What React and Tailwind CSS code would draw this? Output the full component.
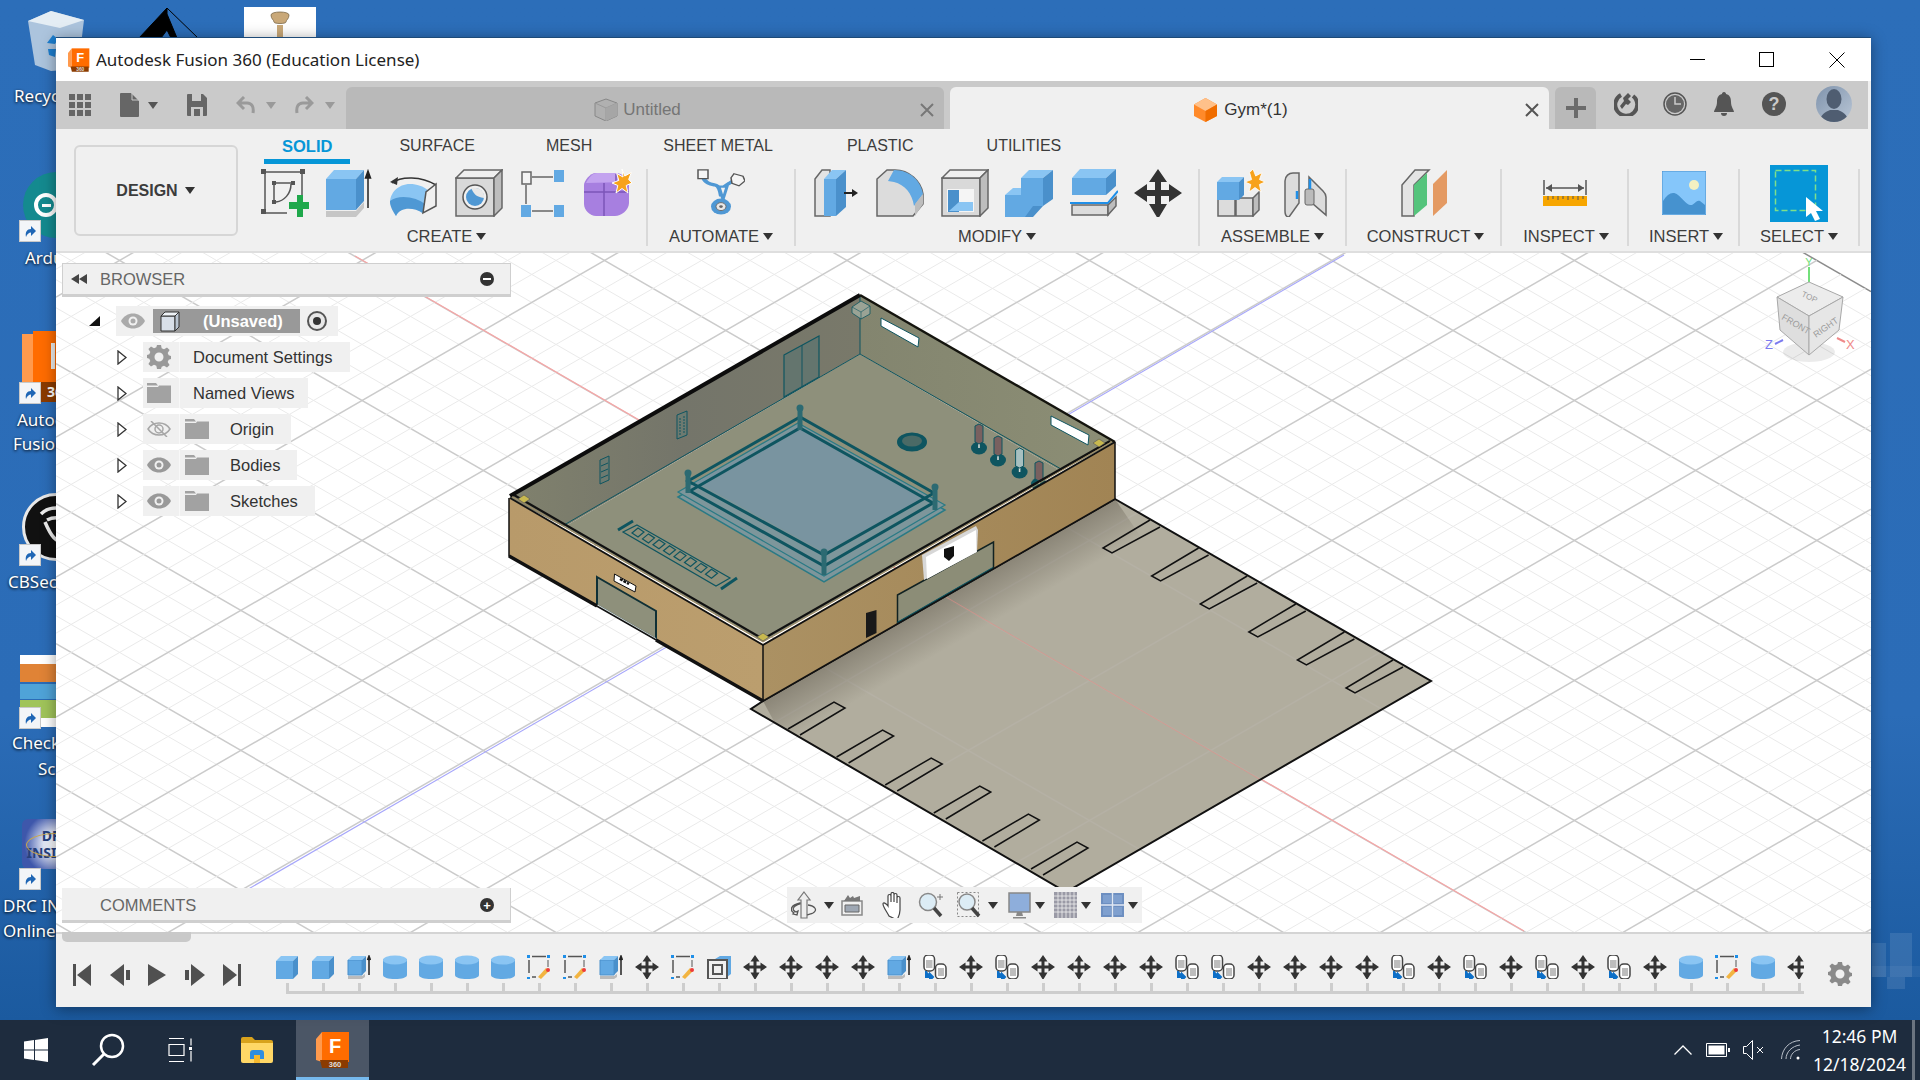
import React from 'react';

const Caret = ({ c = '#333' }) => (
  <svg width="10" height="7" viewBox="0 0 10 7" className="shrink-0"><path d="M0 0h10L5 7z" fill={c} /></svg>
);

// small glyphs shared by the toolbar and the timeline
const MoveIcon = ({ s = 24 }) => (
  <svg width={s} height={s} viewBox="0 0 48 48">
    <path d="M24 0l9 13h-6v8h8v-6l13 9-13 9v-6h-8v8h6l-9 15-9-15h6v-8h-8v6L0 24l13-9v6h8v-8h-6z" fill="#333" transform="translate(0 0)" />
    <path d="M22 10h4v28h-4zM10 22h28v4H10z" fill="#333" />
  </svg>
);

const BoxIcon = () => (
  <svg width="24" height="24" viewBox="0 0 24 24">
    <path d="M1 6h17v18H1z" fill="#62a9e3" />
    <path d="M1 6l5-5h17l-5 5z" fill="#8ac5f3" />
    <path d="M18 6l5-5v18l-5 5z" fill="#4a90cb" />
  </svg>
);

const ExtrudeSmall = () => (
  <svg width="24" height="24" viewBox="0 0 24 24">
    <path d="M1 5h14v15H1z" fill="#62a9e3" stroke="#4a90cb" />
    <path d="M1 5l4-4h14l-4 4z" fill="#8ac5f3" />
    <path d="M15 5l4-4v15l-4 4z" fill="#4a90cb" />
    <path d="M1 21h14l3-2v3l-3 2H1z" fill="#bbb" />
    <path d="M22 20V3M20.5 5L22 1l1.500 4" stroke="#222" strokeWidth="1.500" fill="none" />
  </svg>
);

const CylIcon = () => (
  <svg width="24" height="24" viewBox="0 0 24 24">
    <path d="M0 4v16c0 2.500 5 4 12 4s12-1.500 12-4V4z" fill="#62a9e3" />
    <ellipse cx="12" cy="5" rx="12" ry="4.500" fill="#8ac5f3" />
  </svg>
);

const SketchEdit = () => (
  <svg width="24" height="24" viewBox="0 0 24 24">
    <path d="M5 1.500h14M2 5v13M5 22h4" stroke="#555" strokeWidth="1.500" fill="none" />
    <path d="M21 5v7" stroke="#555" strokeWidth="1" fill="none" />
    <path d="M0 0h3v3H0zM20 0h3v3h-3zM0 22h3v3H0z" fill="#1f8fe8" />
    <path d="M11 22l8-9 3 3-8 8z" fill="#f2b441" />
    <circle cx="21" cy="15" r="2" fill="#ee3b3b" />
  </svg>
);

const ShellIcon = () => (
  <svg width="24" height="24" viewBox="0 0 24 24">
    <path d="M8 4l5-3h11v18l-4 3V4z" fill="#62a9e3" />
    <path d="M1 5h19v19H1z" fill="#f0f0f0" stroke="#555" strokeWidth="2" />
    <path d="M6 10h9v9H6z" fill="none" stroke="#555" strokeWidth="2" />
  </svg>
);

const JointIcon = () => (
  <svg width="24" height="24" viewBox="0 0 24 24">
    <rect x="1" y="0" width="10.500" height="16" rx="4" fill="#fff" stroke="#444" strokeWidth="1.500" />
    <path d="M3 5h6.500v8H3z" fill="#bdbdbd" />
    <rect x="12.500" y="9" width="10.500" height="15" rx="4" fill="#fff" stroke="#444" strokeWidth="1.500" />
    <path d="M15 13h6v8h-6z" fill="#bdbdbd" />
    <path d="M3 16v6h7M7 19l3 3-3 3z" stroke="#0d6fc7" strokeWidth="2" fill="#0d6fc7" />
  </svg>
);

const EyeIcon = ({ off, c = '#999' }) => (
  <svg width="24" height="16" viewBox="0 0 24 16">
    {off ? (
      <g fill="none" stroke="#a6a6a6" strokeWidth="1.500">
        <path d="M1 8c5-8 17-8 22 0-5 8-17 8-22 0z" />
        <circle cx="12" cy="8" r="4" />
        <path d="M4 0l16 16" />
      </g>
    ) : (
      <>
        <path d="M0 8c5-10 19-10 24 0-5 10-19 10-24 0z" fill={c} />
        <circle cx="12" cy="8" r="4.500" fill="#f0f0f0" />
        <circle cx="12" cy="8" r="2.500" fill={c} />
      </>
    )}
  </svg>
);

const FolderIcon = () => (
  <svg width="24" height="20" viewBox="0 0 24 20">
    <path d="M0 0h9l2 2.500H0zM0 4h11l1-1.500h12V20H0z" fill="#a2a2a2" />
  </svg>
);

const GearIcon = ({ s = 24, c = '#999' }) => (
  <svg width={s} height={s} viewBox="0 0 24 24">
    <path
      fillRule="evenodd"
      fill={c}
      d="M10 0h4l.7 3.300 2.300 1L20 2.400 22.600 5l-1.900 3 1 2.300L24 11v3l-2.300.7-1 2.300 1.900 3-2.600 2.600-3-1.900-2.300 1L14 24h-4l-.7-3.300-2.300-1-3 1.900L1.400 19l1.900-3-1-2.300L0 13v-3l2.300-.7 1-2.300-1.900-3L4 1.400l3 1.900 2.300-1zM12 7.500a4.500 4.500 0 100 9 4.500 4.500 0 000-9z"
    />
  </svg>
);

const FusionLogo = ({ w = 22, h = 24 }) => (
  <svg width={w} height={h} viewBox="0 0 34 36">
    <path d="M0 7l6-7v30l-6-2z" fill="#ff9a4d" />
    <path d="M6 0h27v30H6z" fill="#ff6c00" />
    <path d="M4 28h28v8H6z" fill="#8b3b00" />
    <text x="19" y="21" fontSize="20" fontWeight="700" fill="#fff" textAnchor="middle" fontFamily="Liberation Sans, sans-serif">F</text>
    <text x="19" y="35" fontSize="7.500" fontWeight="700" fill="#ddd" textAnchor="middle" fontFamily="Liberation Sans, sans-serif">360</text>
  </svg>
);

const Shortcut = () => (
  <div className="flex h-[20px] w-[20px] items-center justify-center bg-[#f3f5f8] ring-1 ring-[#c8c8c8]">
    <svg width="14" height="14" viewBox="0 0 14 14"><path d="M3 13c-1-5 1-8 5-8V2l5 5-5 5V8.500C6 8.500 4 10 3 13z" fill="#1f66b5" /></svg>
  </div>
);

/* ---------- ribbon icons, 48px ---------- */
const SketchTool = () => (
  <svg width="48" height="48" viewBox="0 0 48 48">
    <path d="M4 4v38M4 3h38M41 4v24M4 44h22" stroke="#555" strokeWidth="1.500" fill="none" />
    <path d="M0 0h5v5H0zM39 0h5v5h-5zM0 40h5v5H0z" fill="#555" />
    <path d="M13 14v18M13 14h18M30 15c0 10-7 17-15 18" stroke="#555" strokeWidth="1.500" fill="none" />
    <path d="M11 12h4v4h-4zM30 12h4v4h-4zM11 31h4v4h-4z" fill="#555" />
    <path d="M36 33v-7h6v7h6v7h-6v8h-6v-8h-8v-7z" fill="#1fa84b" />
  </svg>
);
const ExtrudeTool = () => (
  <svg width="48" height="48" viewBox="0 0 48 48">
    <path d="M0 10h30v31H0z" fill="#62a9e3" />
    <path d="M0 10L8 1h30l-8 9z" fill="#8ac5f3" />
    <path d="M30 10l8-9v31l-8 9z" fill="#4a90cb" />
    <path d="M0 42h30l8-9v6l-8 9H0z" fill="#c6c6c6" />
    <path d="M42 39V5M39.500 9L42 2l2.500 7z" stroke="#222" strokeWidth="1.500" fill="#222" />
  </svg>
);
const RevolveTool = () => (
  <svg width="48" height="48" viewBox="0 0 48 48">
    <path d="M2 14c9-7 29-7 44 2" stroke="#333" strokeWidth="1.500" fill="none" />
    <path d="M0 13l8-5-1 8z" fill="#333" />
    <path d="M0 34c0-10 8-19 20-19 7 0 13 2 19 7l-7 22c-7-7-22-7-26 3z" fill="#8ac5f3" />
    <path d="M0 32c0 6 3 10 6 15 4-9 17-9 27-3l3-8c-9-8-27-11-36-4z" fill="#4f98d4" />
    <path d="M33 44l3-21 10-8v22z" fill="#f0f0f0" stroke="#555" strokeWidth="1.500" />
  </svg>
);
const HoleTool = () => (
  <svg width="48" height="48" viewBox="0 0 48 48">
    <path d="M1 9h38v38H1z" fill="#d9d9d9" stroke="#666" strokeWidth="1.500" />
    <path d="M1 9l8-8h38l-8 8z" fill="#efefef" stroke="#666" strokeWidth="1.500" />
    <path d="M39 9l8-8v38l-8 8z" fill="#bdbdbd" stroke="#666" strokeWidth="1.500" />
    <circle cx="20" cy="28" r="12" fill="#f0f0f0" stroke="#555" strokeWidth="1.500" />
    <circle cx="20" cy="28" r="9" fill="#4f98d4" />
    <path d="M16 19c3 6 5 9 13 10 1-6-4-11-13-10z" fill="#e8e8e8" />
  </svg>
);
const PatternTool = () => (
  <svg width="44" height="48" viewBox="0 0 44 48">
    <path d="M1 3h9v12H1z" fill="#f3f3f3" stroke="#666" strokeWidth="1.500" />
    <path d="M33 1h10v12H33zM0 36h10v12H0zM33 36h10v12H33z" fill="#62a9e3" />
    <path d="M11 8h21M5 16v19M11 42h21" stroke="#666" strokeWidth="1.500" fill="none" />
  </svg>
);
const FormTool = () => (
  <svg width="48" height="48" viewBox="0 0 48 48">
    <path d="M0 16c0-4 6-12 12-12h20c6 0 13 6 13 12v18c0 7-8 13-14 13H12C6 47 0 41 0 35z" fill="#a77fe0" />
    <path d="M2 14c3-6 7-10 11-10h18c5 0 9 4 12 9z" fill="#c3a3ef" />
    <path d="M0 23h45M20 14v33M32 5v10" stroke="#7c56b8" strokeWidth="1.500" fill="none" />
    <path d="M38 0l2.800 7 6.500-3.600-2.600 7L48 14l-5.800 2.500L44 24l-6-4.500-6 4.500 1.800-7.500L28 14l6.800-2.600-2.100-7 6.300 3.600z" fill="#f7a21b" stroke="#fff" strokeWidth="1" />
  </svg>
);
const AutomateTool = () => (
  <svg width="48" height="48" viewBox="0 0 48 60" preserveAspectRatio="none">
    <path d="M6 10c2 8 8 9 12 10 4 1 5 6 6 14 1-8 2-12 8-16l10-8" stroke="#4f98d4" strokeWidth="4" fill="none" />
    <path d="M22 22h8l-4 16z" fill="#f0f0f0" stroke="#4f98d4" strokeWidth="3" />
    <path d="M1 1h10v11H1z" fill="#f5f5f5" stroke="#555" strokeWidth="1.500" />
    <path d="M37 6l9 3 2 6-6 6-7-3-1-7z" fill="#f5f5f5" stroke="#555" strokeWidth="1.500" />
    <circle cx="24" cy="47" r="10" fill="#4f98d4" />
    <circle cx="24" cy="47" r="5" fill="#e8e8e8" stroke="#666" />
    <circle cx="24" cy="47" r="1.800" fill="#666" />
  </svg>
);
const PressPull = () => (
  <svg width="44" height="48" viewBox="0 0 44 48">
    <path d="M1 10L8 1h8v46H1z" fill="#e4e4e4" stroke="#666" strokeWidth="1.500" />
    <path d="M10 10h12v37H10z" fill="#62a9e3" />
    <path d="M10 10l8-9h14l-10 9z" fill="#8ac5f3" />
    <path d="M22 10l10-9v37l-10 9z" fill="#4a90cb" />
    <path d="M30 23h8v-3l6 4-6 4v-3h-8z" fill="#222" />
  </svg>
);
const FilletTool = () => (
  <svg width="48" height="48" viewBox="0 0 48 48">
    <path d="M1 47V10l10-9h8c14 0 26 11 28 24v10l-10 12z" fill="#dcdcdc" stroke="#666" strokeWidth="1.500" />
    <path d="M18 1c16 0 27 11 29 24l-9 12C36 24 29 16 18 13l-6-1z" fill="#62a9e3" />
    <path d="M39 47l8-12V25l-8 10z" fill="#bdbdbd" />
  </svg>
);
const ShellTool = () => (
  <svg width="48" height="48" viewBox="0 0 48 48">
    <path d="M1 9h38v38H1z" fill="#d9d9d9" stroke="#666" strokeWidth="1.500" />
    <path d="M1 9l8-8h38l-8 8z" fill="#efefef" stroke="#666" strokeWidth="1.500" />
    <path d="M39 9l8-8v38l-8 8z" fill="#bdbdbd" stroke="#666" strokeWidth="1.500" />
    <path d="M6 20h27v23H6z" fill="#f5f5f5" />
    <path d="M7 21h11v22H7z" fill="#4a90cb" />
    <path d="M18 33h14v9H8z" fill="#8ac5f3" />
  </svg>
);
const CombineTool = () => (
  <svg width="48" height="48" viewBox="0 0 48 48">
    <path d="M0 26h28v22H0z" fill="#62a9e3" />
    <path d="M0 26l8-7h20l-8 7z" fill="#8ac5f3" />
    <path d="M16 9h22v28H16z" fill="#62a9e3" />
    <path d="M16 9l8-8h24l-10 8z" fill="#8ac5f3" />
    <path d="M38 9l10-8v29l-10 7zM28 37h-0l-8 11h8l10-11z" fill="#4a90cb" />
  </svg>
);
const ReplaceTool = () => (
  <svg width="48" height="48" viewBox="0 0 48 48">
    <path d="M2 9h34v17H2z" fill="#62a9e3" />
    <path d="M2 9l8-9h36l-10 9z" fill="#8ac5f3" />
    <path d="M36 9l10-9v17l-10 9z" fill="#4a90cb" />
    <path d="M0 34h38L48 22" stroke="#1f8fe8" strokeWidth="2" fill="none" />
    <path d="M2 36h36v10H2z" fill="#dcdcdc" stroke="#666" strokeWidth="1.500" />
    <path d="M38 46l8-9V28l-8 8z" fill="#bdbdbd" stroke="#666" strokeWidth="1.500" />
  </svg>
);
const NewComp = () => (
  <svg width="48" height="48" viewBox="0 0 48 48">
    <path d="M1 29h17v18H1zM19 29h17v18H19z" fill="#dcdcdc" stroke="#666" strokeWidth="1.500" />
    <path d="M36 29l6-6v18l-6 6z" fill="#bdbdbd" stroke="#666" strokeWidth="1.500" />
    <path d="M0 13h22v18H0z" fill="#62a9e3" />
    <path d="M0 13l5-5h22l-5 5z" fill="#8ac5f3" />
    <path d="M22 13l5-5v18l-5 5z" fill="#4a90cb" />
    <path d="M36 0l2.700 7 6.300-3.400-2.500 7L48 13l-5.600 2.500 1.700 7.500-6.100-4.500-6 4.500 1.800-7.500L28 13l6.600-2.400-2-7z" fill="#f7a21b" stroke="#fff" strokeWidth=".8" />
  </svg>
);
const JointTool = () => (
  <svg width="44" height="48" viewBox="0 0 44 48">
    <path d="M2 12c0-5 4-8 8-8h6v30L6 48c-3 0-4-3-4-6z" fill="#dcdcdc" stroke="#666" strokeWidth="1.500" />
    <path d="M26 20V8l14 14c2 2 3 3 3 6v18L29 34z" fill="#dcdcdc" stroke="#666" strokeWidth="1.500" />
    <rect x="22" y="20" width="9" height="16" rx="2" fill="#bbb" stroke="#666" />
    <path d="M14 30v-8M27 20V10" stroke="#1f8fe8" strokeWidth="2.500" />
  </svg>
);
const PlaneTool = () => (
  <svg width="46" height="48" viewBox="0 0 46 48">
    <path d="M1 16L14 1h14L13 16v31H1z" fill="#e4e4e4" stroke="#666" strokeWidth="1.500" />
    <path d="M13 16L26 4v32L13 47z" fill="#55c47c" />
    <path d="M32 15L46 1v33L32 47z" fill="#e49a63" />
  </svg>
);
const MeasureTool = () => (
  <svg width="44" height="26" viewBox="0 0 44 26">
    <path d="M1 0v15M43 0v15M3 8h38" stroke="#555" strokeWidth="1.500" fill="none" />
    <path d="M3 8l6-4v8zM41 8l-6-4v8z" fill="#555" />
    <path d="M0 16h44v10H0z" fill="#f7a600" />
    <path d="M5 16v4M10 16v3M15 16v4M20 16v3M25 16v4M30 16v3M35 16v4M40 16v3" stroke="#555" />
  </svg>
);
const InsertTool = () => (
  <svg width="44" height="44" viewBox="0 0 44 44">
    <path d="M0 0h44v44H0z" fill="#85c6fa" stroke="#4a90cb" />
    <circle cx="32" cy="14" r="5" fill="#f3f0c2" />
    <path d="M1 43V30c5-8 10-10 15-6 4 3 8 9 12 10 4 1 6-6 10-4l5 4v9z" fill="#4692cf" />
  </svg>
);
const SelectTool = () => (
  <div className="flex h-[57px] w-[58px] bg-[#0696d7]">
    <svg width="58" height="57" viewBox="0 0 58 57">
      <path d="M5.500 5.500h40v40h-40z" fill="none" stroke="#7ee08a" strokeWidth="1.500" strokeDasharray="6 3" />
      <path d="M36 32v20l5-4 4 8 5-2-4-8h7z" fill="#fff" />
    </svg>
  </div>
);

const Tool = ({ children }) => <div className="flex h-[48px] w-[48px] items-center justify-center">{children}</div>;

function Group({ className, label, children, gap = 'gap-[16.5px]', labelClass = '' }) {
  return (
    <div className={`flex h-[77px] flex-col items-center border-r-2 border-[#d9d9d9] ${className}`}>
      <div className={`flex h-[48px] items-center ${gap}`}>{children}</div>
      <div className={`mt-[10px] flex items-center gap-[4px] text-[16.500px] leading-[18px] text-[#3c3c3c] ${labelClass}`}>
        {label} <Caret />
      </div>
    </div>
  );
}

/* ---------- 3d viewport ---------- */
const K = 0.5774;
function Grid({ strong }) {
  const lines = [];
  const c0 = -788.6;
  for (let k = 0; k < 62; k++) {
    const c = c0 + 28 * k;
    const major = k % 5 === 0;
    if (strong && !major) continue;
    lines.push(
      <line key={'a' + k} x1={56} y1={K * 56 + c} x2={1871} y2={K * 1871 + c}
        stroke={k === 0 ? '#8c8c8c' : major ? '#cbcbcb' : '#eaeaea'} strokeWidth={major ? 1.5 : 1} />
    );
  }
  for (let k = 0; k < 64; k++) {
    const c = 273.5 + 28 * k;
    const major = k % 5 === 2;
    if (strong && !major) continue;
    const xEnd = Math.min(1871, (c - c0) / (2 * K));
    lines.push(
      <line key={'b' + k} x1={56} y1={-K * 56 + c} x2={xEnd} y2={-K * xEnd + c}
        stroke={major ? '#cbcbcb' : '#eaeaea'} strokeWidth={major ? 1.5 : 1} />
    );
  }
  return <g>{lines}</g>;
}

const TEAL = '#0e5560';
const slots = [0, 1, 2, 3, 4, 5];

function Bag({ x, y, top, fill }) {
  return (
    <g>
      <ellipse cx={x} cy={y} rx="8" ry="6.500" fill={TEAL} />
      <path d={`M${x - 0.8} ${top + 18}v${y - top - 18}h1.600v-${y - top - 18}z`} fill="#d8dcd8" />
      <path d={`M${x - 4} ${top + 2}l4-2 4 2v16l-4 2-4-2z`} fill={fill} stroke={TEAL} strokeWidth="1" />
    </g>
  );
}

function Model() {
  return (
    <g>
      <polygon points="1115,499 1431,681 1066,892 751,709 763,701" fill="#b1ad9f" />
      <g clipPath="url(#groundClip)">
        <g opacity="0.14"><Grid strong /></g>
        <polygon points="1115,499 763,701 800,770 1160,565" fill="url(#groundShade)" />
      </g>
      <line x1="946" y1="597" x2="1261" y2="780" stroke="#e58b84" strokeOpacity="0.6" />
      <polygon points="1115,499 1431,681 1066,892 751,709 763,701" fill="none" stroke="#111" strokeWidth="2" />
      {slots.map((i) => (
        <g key={i} transform={`translate(${48.6 * i} ${28 * i})`} fill="none" stroke="#111" strokeWidth="1.500">
          <path d="M1150 520L1103 548L1112 553L1160 527" />
          <path d="M788 729L834 702L845 708L800 735" />
        </g>
      ))}

      {/* room */}
      <polygon points="860,295 509,498 564,527 860,354" fill="url(#wallL)" />
      <polygon points="860,295 1115,442 1061,471 860,354" fill="url(#wallR)" />
      <polygon points="860,354 564,527 763,642 1061,471" fill="#8e907b" />
      <path d="M860 297V354L564 525M860 354L1061 469" stroke={TEAL} strokeWidth="1" fill="none" />

      <polygon points="784,355 819,336 819,377 784,397" fill="#64756e" stroke={TEAL} strokeWidth="1.200" />
      <path d="M802 345V387" stroke={TEAL} />
      <polygon points="677,415 687,411 687,435 677,439" fill="#6d7a70" stroke={TEAL} />
      <path d="M680 418v17M684 416v17" stroke={TEAL} strokeDasharray="2 1" />
      <polygon points="600,460 609,456 609,480 600,484" fill="#6d7a70" stroke={TEAL} />
      <path d="M601 466l7-3M601 472l7-3M601 478l7-3" stroke={TEAL} />
      <polygon points="881,318 919,338 918,347 881,326" fill="#fff" stroke={TEAL} />
      <polygon points="1051,416 1089,435 1088,445 1051,425" fill="#fff" stroke={TEAL} />
      <polygon points="852,307 861,301 870,306 870,314 861,319 852,313" fill="#9aa395" stroke={TEAL} strokeWidth=".8" />
      <path d="M852 307l9 5 9-6M861 312v7" stroke={TEAL} strokeWidth=".6" fill="none" />

      {/* ring */}
      <polygon points="678,497 798,427 945,510 824,582" fill="#7d969b" stroke="#2a7a85" strokeWidth="1.500" />
      <polygon points="678,492 798,423 945,505 824,576" fill="#7d969b" stroke="#2a7a85" strokeWidth="1.200" />
      <polygon points="697,482 798,427 928,498 824,552" fill="#7994a0" />
      <polygon points="690,491 800,428 933,503 824,566" fill="none" stroke={TEAL} strokeWidth="3" />
      <polygon points="688,481 800,417 934,493 824,555" fill="none" stroke={TEAL} strokeWidth="3" />
      {[[688, 473, 493], [800, 408, 430], [935, 487, 510], [824, 552, 575]].map(([x, a, b]) => (
        <g key={x}>
          <path d={`M${x} ${a}V${b}`} stroke="#2c6a72" strokeWidth="5" />
          <circle cx={x} cy={a} r="3.500" fill="#2c6a72" />
        </g>
      ))}

      {/* bench */}
      <polygon points="637,525 730,578 716,586 623,532" fill="none" stroke={TEAL} strokeWidth="1.200" />
      <path d="M633 521L618 530M737 578L721 589" stroke={TEAL} strokeWidth="3" />
      {[0, 1, 2, 3, 4, 5, 6, 7].map((i) => (
        <polygon key={i} transform={`translate(${10.500 * i} ${5.900 * i})`} points="638,528 644,532 638,537 632,533" fill="none" stroke={TEAL} strokeWidth="1.200" />
      ))}

      {/* weights */}
      <ellipse cx="912" cy="442" rx="15" ry="9.500" fill={TEAL} />
      <ellipse cx="912" cy="441" rx="10" ry="5.500" fill="#4a6a66" />
      <Bag x={979} y={448} top={424} fill="#79605f" />
      <Bag x={998} y={460} top={436} fill="#79605f" />
      <Bag x={1019.6} y={472} top={448} fill="#a7c0c0" />
      <Bag x={1039} y={484} top={461} fill="#79605f" />

      {/* outside walls */}
      <polygon points="509,498 763,644 763,701 509,556" fill="url(#faceL)" />
      <polygon points="763,644 1115,442 1115,499 763,701" fill="url(#faceR)" />
      <polygon points="597,577 656,611 656,639 597,605" fill="#8e907b" stroke="#0f3036" strokeWidth="2" />
      <path d="M597 605l59 34" stroke="#cfd6d4" strokeWidth="1.500" />
      <polygon points="614.500,574 636,586 635,592 614,581" fill="#fff" stroke="#111" />
      <path d="M620 579l9 5" stroke="#111" strokeWidth="2.500" strokeDasharray="3 1" />
      <polygon points="897.500,595 993.500,542 993.500,568 897.500,623" fill="#8c8d77" stroke="#122" strokeWidth="1.500" />
      <path d="M897.500 623l96-55" stroke={TEAL} strokeWidth="2.500" />
      <polygon points="866,613 876.500,610 876.500,633 866,638" fill="#191919" />
      <polygon points="924,580 922,555 976,526 978,530 977,552" fill="#d7d7d7" />
      <polygon points="926,557 976,530 976.500,552 927,579" fill="#fff" />
      <path d="M944 549l10-3v10l-5 5-5-4z" fill="#111" />
      <path d="M509 498V556L763 701V644M763 701L1115 499V442" fill="none" stroke="#111" strokeWidth="1.500" />
      <path d="M509 556L597 606M656 640L763 701" stroke="#111" strokeWidth="3.500" />

      {/* top edges */}
      <path d="M510 496L860 295" stroke="#0c0c0c" strokeWidth="4" />
      <path d="M860 295L1115 442" stroke="#14140e" strokeWidth="2.500" />
      <path d="M514 495L763 639L1110 441" stroke="#111" strokeWidth="2.200" fill="none" />
      <path d="M510 498L763 645L1115 442" stroke="#111" strokeWidth="1.800" fill="none" />
      <path d="M512 496.500L763 642L1112 441.500" stroke="#a48a5e" strokeWidth=".9" fill="none" />
      {[[524, 499], [763, 637], [1099, 443]].map(([x, y]) => (
        <polygon key={x} points={`${x - 6},${y} ${x},${y - 4} ${x + 6},${y} ${x},${y + 4}`} fill="#c8b94f" stroke="#555" strokeWidth=".6" />
      ))}
    </g>
  );
}

function ViewCube() {
  return (
    <g fontFamily="Liberation Sans, sans-serif" fontSize="8" fill="#9c9c9c">
      <ellipse cx="1809" cy="352" rx="26" ry="10" fill="#000" opacity="0.08" />
      <path d="M1809 282v-15" stroke="#73e07a" strokeWidth="2" />
      <text x="1809" y="266" fontSize="11" fill="#73e07a" textAnchor="middle">Y</text>
      <path d="M1783 340l-8 4" stroke="#7b7bef" strokeWidth="2" />
      <text x="1765" y="349" fontSize="13" fill="#7b7bef">Z</text>
      <path d="M1837 338l8 4" stroke="#ef8a8a" strokeWidth="2" />
      <text x="1846" y="349" fontSize="13" fill="#ef8a8a">X</text>
      <polygon points="1809,282 1777,297 1809,316 1843,297" fill="#ececec" stroke="#a8a8a8" />
      <polygon points="1777,297 1809,316 1809,355 1780,330" fill="#dedede" stroke="#a8a8a8" />
      <polygon points="1843,297 1809,316 1809,355 1839,330" fill="#e6e6e6" stroke="#a8a8a8" />
      <text transform="translate(1801 296) rotate(25)">TOP</text>
      <text transform="translate(1781 319) rotate(30)" fontSize="9">FRONT</text>
      <text transform="translate(1816 338) rotate(-35)" fontSize="9">RIGHT</text>
    </g>
  );
}

function Viewport() {
  return (
    <svg className="block" width="1815" height="679" viewBox="56 253 1815 679">
      <defs>
        <clipPath id="groundClip"><polygon points="1115,499 1431,681 1066,892 751,709 763,701" /></clipPath>
        <linearGradient id="groundShade" gradientUnits="userSpaceOnUse" x1="939" y1="600" x2="962" y2="640">
          <stop offset="0" stopColor="#5c5548" stopOpacity="0.45" />
          <stop offset="1" stopColor="#5c5548" stopOpacity="0" />
        </linearGradient>
        <linearGradient id="wallL" x1="0" x2="1" y1="0" y2="0">
          <stop offset="0" stopColor="#80816d" />
          <stop offset="0.5" stopColor="#74756a" />
          <stop offset="1" stopColor="#79796a" />
        </linearGradient>
        <linearGradient id="wallR" x1="0" x2="1" y1="0" y2="0">
          <stop offset="0" stopColor="#83856f" />
          <stop offset="1" stopColor="#8c8e75" />
        </linearGradient>
        <linearGradient id="faceL" x1="0" x2="1" y1="0" y2="0">
          <stop offset="0" stopColor="#b89a6a" />
          <stop offset="1" stopColor="#bb9e6e" />
        </linearGradient>
        <linearGradient id="faceR" x1="0" x2="1" y1="0" y2="0">
          <stop offset="0" stopColor="#ab9163" />
          <stop offset="1" stopColor="#a18454" />
        </linearGradient>
      </defs>
      <Grid />
      <line x1="355" y1="256" x2="1524" y2="931" stroke="#f5a6a6" strokeWidth="1.300" />
      <line x1="1344" y1="255" x2="200" y2="917" stroke="#a6a6fb" strokeWidth="1.100" />
      <Model />
      <ViewCube />
    </svg>
  );
}

/* ---------- browser tree ---------- */
function Row({ eye, icon, label, className = '' }) {
  return (
    <div className="mt-[6px] flex h-[30px] items-center">
      <svg width="10" height="15" viewBox="0 0 10 15" className="ml-[55px]"><path d="M1 1l8 6.500-8 6.500z" fill="#fff" stroke="#333" strokeWidth="1.300" /></svg>
      <div className={`ml-[16px] flex h-full items-center bg-[#f0f0f0] ${className}`}>
        <div className="flex h-full w-[37px] items-center border-r border-[#f8f8f8] pl-[4px]">
          {eye === 'on' && <EyeIcon />}
          {eye === 'off' && <EyeIcon off />}
          {eye === 'gear' && <GearIcon />}
          {eye === 'folder' && <FolderIcon />}
        </div>
        {icon && <div className="ml-[5px] flex w-[24px]"><FolderIcon /></div>}
        <span className={`text-[16.500px] text-[#333] ${icon ? 'ml-[21px]' : 'ml-[13px]'}`}>{label}</span>
      </div>
    </div>
  );
}

function BrowserPanel() {
  return (
    <div className="absolute left-[6px] top-[10px] w-[449px]">
      <div className="flex h-[34px] items-center border border-[#cfcfcf] border-b-[3px] bg-[#f0f0f0] pl-[8px] pr-[16px]">
        <svg width="16" height="10" viewBox="0 0 16 10"><path d="M8 0v10L0 5zM16 0v10L8 5z" fill="#444" /></svg>
        <span className="ml-[13px] flex-1 text-[16.500px] text-[#666]">BROWSER</span>
        <div className="flex h-[14px] w-[14px] items-center justify-center rounded-full bg-[#333]"><div className="h-[2px] w-[8px] bg-white" /></div>
      </div>
      <div className="mt-[9px] flex h-[30px] items-center">
        <svg width="11" height="10" viewBox="0 0 11 10" className="ml-[27px]"><path d="M0 10h11V0z" fill="#111" /></svg>
        <div className="ml-[16px] flex h-full w-[222px] items-center bg-[#f0f0f0]">
          <div className="flex w-[33px] justify-center"><EyeIcon c="#aaa" /></div>
          <div className="ml-[4px] flex h-[24px] w-[147px] items-center bg-[#999] pl-[7px]">
            <svg width="20" height="21" viewBox="0 0 20 21"><path d="M1 5h14v15H1z" fill="#d8dfe8" stroke="#333" /><path d="M1 5l4-4h14l-4 4z" fill="#eef2f6" stroke="#333" /><path d="M15 5l4-4v15l-4 4z" fill="#b9c4d0" stroke="#333" /></svg>
            <span className="ml-[23px] text-[16.500px] font-bold text-white">(Unsaved)</span>
          </div>
          <div className="ml-[7px] flex h-[20px] w-[20px] items-center justify-center rounded-full border-2 border-[#555] bg-[#e8e8e8]"><div className="h-[8px] w-[8px] rounded-full bg-[#333]" /></div>
        </div>
      </div>
      <Row eye="gear" label="Document Settings" className="w-[207px]" />
      <Row eye="folder" label="Named Views" className="w-[165px]" />
      <Row eye="off" icon label="Origin" className="w-[148px]" />
      <Row eye="on" icon label="Bodies" className="w-[154px]" />
      <Row eye="on" icon label="Sketches" className="w-[172px]" />
    </div>
  );
}

function NavBar() {
  return (
    <div className="absolute left-[731px] top-[634px] flex h-[36px] w-[355px] items-center bg-[#f0f0f0] pl-[4px]">
      <svg width="26" height="28" viewBox="0 0 26 28">
        <path d="M13 1l6 8h-3v18h-6V9H7z" fill="#eee" stroke="#777" strokeWidth="1.200" />
        <path d="M9 13C2 15 0 19 5 21l2-1-1 4-4-1 1-1c-5-3-3-8 6-10zM17 14c7 1 10 5 5 8-2 1-3 1-6 2" fill="none" stroke="#555" strokeWidth="1.300" />
      </svg>
      <div className="ml-[7px]"><Caret /></div>
      <svg width="22" height="24" viewBox="0 0 22 24" className="ml-[7px]">
        <path d="M1 8h20v14H1z" fill="#f0f0f0" stroke="#888" strokeWidth="1.500" />
        <path d="M4 12h14v7H4z" fill="#9ea7b3" stroke="#666" />
        <path d="M3 8l4-6 2 3 3-2 1 2 6-2v5z" fill="#777" />
      </svg>
      <svg width="24" height="26" viewBox="0 0 24 26" className="ml-[19px]">
        <path d="M7 24C5 20 1 15 1 12c0-2 3-1 5 2V4c0-2 3-2 3 0v6-8c0-2 3-2 3 0v8-7c0-2 3-2 3 0v8-5c0-2 3-2 3 0v12c0 4-1 6-3 10z" fill="#fff" stroke="#444" strokeWidth="1.200" />
      </svg>
      <svg width="26" height="26" viewBox="0 0 26 26" className="ml-[12px]">
        <circle cx="10" cy="10" r="8.500" fill="#dcecf5" stroke="#888" strokeWidth="1.500" />
        <path d="M16 16l7 8" stroke="#444" strokeWidth="3.500" />
        <path d="M19 5h6M22 2v6" stroke="#777" />
      </svg>
      <svg width="24" height="26" viewBox="0 0 24 26" className="ml-[13px]">
        <path d="M.5.500h21v24H.5z" fill="none" stroke="#888" strokeDasharray="2 2" />
        <circle cx="10" cy="10" r="8" fill="#dcecf5" stroke="#888" strokeWidth="1.500" />
        <path d="M15 16l7 8" stroke="#444" strokeWidth="3.500" />
      </svg>
      <div className="ml-[7px]"><Caret /></div>
      <svg width="23" height="27" viewBox="0 0 23 27" className="ml-[10px]">
        <path d="M1 1h21v19H1z" fill="#8eaedb" stroke="#888" strokeWidth="1.500" />
        <path d="M9 20h5l1 4H8zM5 25h13v1.500H5z" fill="#888" />
      </svg>
      <div className="ml-[4px]"><Caret /></div>
      <svg width="23" height="26" viewBox="0 0 23 26" className="ml-[9px]">
        <path d="M0 0h23v26H0z" fill="#9a9aa6" />
        <path d="M4 0v26M8 0v26M12 0v26M16 0v26M20 0v26M0 4h23M0 8h23M0 12h23M0 16h23M0 20h23" stroke="#f0f0f0" strokeWidth=".8" />
      </svg>
      <div className="ml-[4px]"><Caret /></div>
      <svg width="23" height="24" viewBox="0 0 23 24" className="ml-[10px]">
        <path d="M0 0h23v24H0z" fill="#6d8fc1" />
        <path d="M11.500 0v24M0 12h23" stroke="#dfe7f3" strokeWidth="1.500" />
        <path d="M2 2h8v8H2zM13 2h8v8h-8zM2 14h8v8H2zM13 14h8v8h-8z" fill="#7fa0cf" />
      </svg>
      <div className="ml-[4px]"><Caret /></div>
    </div>
  );
}

/* ---------- timeline ---------- */
const b = 'box', e = 'extrude', c = 'cyl', s = 'sketch', h = 'shell', m = 'move', j = 'joint';
const steps = [b, b, e, c, c, c, c, s, s, e, m, s, h, m, m, m, m, e, j, m, j, m, m, m, m, j, j, m, m, m, m, j, m, j, m, j, m, j, m, c, s, c, m];

function StepIcon({ kind }) {
  if (kind === b) return <BoxIcon />;
  if (kind === e) return <ExtrudeSmall />;
  if (kind === c) return <CylIcon />;
  if (kind === s) return <SketchEdit />;
  if (kind === h) return <ShellIcon />;
  if (kind === j) return <JointIcon />;
  return <MoveIcon />;
}

function Timeline() {
  return (
    <div className="relative flex h-[75px] border-t-2 border-[#d4d4d4]">
      <div className="absolute left-[6px] -top-[2px] h-[10px] w-[129px] rounded-b-[5px] bg-[#c9c9c9]" />
      <div className="flex w-[213px] items-start gap-[18.500px] pl-[17px] pt-[30px] text-[#505050]">
        <svg width="18" height="22" viewBox="0 0 18 22"><path d="M0 0h3v22H0zM18 0v22L4 11z" fill="#505050" /></svg>
        <svg width="20" height="22" viewBox="0 0 20 22"><path d="M14 0v22L0 11zM16 6h4v10h-4z" fill="#505050" /></svg>
        <svg width="18" height="22" viewBox="0 0 18 22"><path d="M0 0l18 11L0 22z" fill="#505050" /></svg>
        <svg width="20" height="22" viewBox="0 0 20 22"><path d="M6 0v22l14-11zM0 6h4v10H0z" fill="#505050" /></svg>
        <svg width="18" height="22" viewBox="0 0 18 22"><path d="M0 0v22l14-11zM15 0h3v22h-3z" fill="#505050" /></svg>
      </div>
      <div className="w-[1535px] self-start overflow-hidden pt-[21px]">
        <div className="flex">
          {steps.map((kind, i) => (
            <div key={i} className="flex w-[36px] shrink-0 flex-col items-center">
              <div className="h-[24px] w-[24px]"><StepIcon kind={kind} /></div>
              <div className="mt-[4px] h-[8px] w-[3px] bg-[#cdcdcd]" />
            </div>
          ))}
        </div>
        <div className="ml-[17px] h-[3px] bg-[#cdcdcd]" />
      </div>
      <div className="ml-[24px] mt-[28px]"><GearIcon s={24} c="#8a8a8a" /></div>
    </div>
  );
}

/* ---------- window ---------- */
function FusionWindow() {
  return (
    <div className="absolute left-[56px] top-[37px] flex h-[970px] w-[1815px] flex-col border-t border-[#1d4a78] bg-[#f0f0f0] font-['Liberation_Sans',sans-serif] shadow-[0_2px_14px_rgba(0,0,0,0.4)]">
      <div className="flex h-[43px] items-center bg-white pl-[12px]">
        <FusionLogo />
        <span className="ml-[6px] flex-1 font-['Noto_Sans',sans-serif] text-[17px] text-[#222]">Autodesk Fusion 360 (Education License)</span>
        <div className="h-px w-[15px] bg-black" />
        <div className="ml-[54px] h-[15px] w-[15px] border border-black" />
        <svg width="16" height="16" viewBox="0 0 16 16" className="ml-[55px] mr-[26px]"><path d="M.5.500l15 15M15.500.500l-15 15" stroke="#000" /></svg>
      </div>

      <div className="mr-[3px] flex h-[48px] items-center bg-[#cacaca]">
        <svg width="22" height="22" viewBox="0 0 22 22" className="ml-[13px]">
          <path d="M0 0h6v6H0zM8 0h6v6H8zM16 0h6v6h-6zM0 8h6v6H0zM8 8h6v6H8zM16 8h6v6h-6zM0 16h6v6H0zM8 16h6v6H8zM16 16h6v6h-6z" fill="#666" />
        </svg>
        <svg width="19" height="24" viewBox="0 0 19 24" className="ml-[29px]"><path d="M0 1a1 1 0 011-1h10l8 8v15a1 1 0 01-1 1H1a1 1 0 01-1-1z" fill="#666" /><path d="M12 0v7h7" fill="none" stroke="#cacaca" /></svg>
        <div className="ml-[9px]"><Caret c="#555" /></div>
        <svg width="20" height="22" viewBox="0 0 20 22" className="ml-[29px]"><path d="M0 1a1 1 0 011-1h15l4 4v17a1 1 0 01-1 1H1a1 1 0 01-1-1z" fill="#666" /><path d="M5 0h9v7H5zM4 13h12v9H4z" fill="#cacaca" /><path d="M7 15h6v7H7z" fill="#666" /></svg>
        <svg width="20" height="18" viewBox="0 0 20 18" className="ml-[29px]"><path d="M8 1L2 7l6 6M3 7h8c5 0 7 4 6 10" fill="none" stroke="#9a9a9a" strokeWidth="3" /></svg>
        <div className="ml-[10px]"><Caret c="#9a9a9a" /></div>
        <svg width="20" height="18" viewBox="0 0 20 18" className="ml-[18px]"><path d="M12 1l6 6-6 6M17 7H9c-5 0-7 4-6 10" fill="none" stroke="#9a9a9a" strokeWidth="3" /></svg>
        <div className="ml-[11px]"><Caret c="#9a9a9a" /></div>

        <div className="ml-[11px] flex h-[42px] w-[598px] items-center self-end rounded-t-[6px] bg-[#b9b9b9] pt-[3px]">
          <div className="flex flex-1 items-center justify-center gap-[5px] pl-[9px] text-[#757575]">
            <svg width="24" height="23" viewBox="0 0 24 23"><path d="M1 5v13l11 5 11-5V5L12 1z" fill="#b0b0b0" stroke="#888" /><path d="M1 5l11 5 11-5M12 10v13" stroke="#999" fill="none" /><path d="M12 10l11-5v13l-11 5z" fill="#a6a6a6" /></svg>
            <span className="text-[17px]">Untitled</span>
          </div>
          <svg width="14" height="14" viewBox="0 0 14 14" className="mr-[10px]"><path d="M1 1l12 12M13 1L1 13" stroke="#777" strokeWidth="2" /></svg>
        </div>
        <div className="ml-[6px] flex h-[42px] w-[599px] items-center self-end rounded-t-[6px] bg-[#f0f0f0] pt-[3px]">
          <div className="flex flex-1 items-center justify-center gap-[7px] pl-[7px] text-[#333]">
            <svg width="23" height="24" viewBox="0 0 23 24"><path d="M11.500 0L23 6.500V18l-11.500 6L0 18V6.500z" fill="#ff8a2a" /><path d="M0 6.500L11.500 0 23 6.500 11.500 13z" fill="#ffc18a" /><path d="M11.500 13L23 6.500V18l-11.500 6z" fill="#f06d00" /></svg>
            <span className="text-[17px]">Gym*(1)</span>
          </div>
          <svg width="14" height="14" viewBox="0 0 14 14" className="mr-[10px]"><path d="M1 1l12 12M13 1L1 13" stroke="#555" strokeWidth="2" /></svg>
        </div>
        <div className="ml-[6px] flex h-[42px] w-[41px] items-center justify-center self-end rounded-t-[6px] bg-[#b9b9b9]">
          <svg width="20" height="20" viewBox="0 0 20 20"><path d="M8 0h4v8h8v4h-8v8H8v-8H0V8h8z" fill="#6b6b6b" /></svg>
        </div>

        <svg width="24" height="24" viewBox="0 0 24 24" className="ml-[18px] -mt-[2px]"><path d="M7 3a11 11 0 1012 1" fill="none" stroke="#555" strokeWidth="4" /><path d="M9 6l5-5 3 3-3 3 3 3-3 3-2-1-4 5-2-3 4-5z" fill="#555" /></svg>
        <svg width="24" height="24" viewBox="0 0 24 24" className="ml-[25px] -mt-[2px]"><circle cx="12" cy="12" r="11" fill="none" stroke="#555" strokeWidth="1.500" /><circle cx="12" cy="12" r="9" fill="#666" /><path d="M12 5v7h6" stroke="#cacaca" strokeWidth="1.500" fill="none" /></svg>
        <svg width="20" height="24" viewBox="0 0 20 24" className="ml-[27px] -mt-[2px]"><path d="M10 0c1.500 0 2 1 2 2 4 1 5 4 5 8 0 5 3 8 3 10H0c0-2 3-5 3-10 0-4 1-7 5-8 0-1 .5-2 2-2zM7 21h6c0 2-1 3-3 3s-3-1-3-3z" fill="#555" /></svg>
        <div className="ml-[28px] -mt-[2px] flex h-[24px] w-[24px] items-center justify-center rounded-full bg-[#555] text-[18px] font-bold text-[#cacaca]">?</div>
        <div className="ml-[30px] -mt-[2px] flex h-[36px] w-[36px] items-end justify-center overflow-hidden rounded-full bg-[linear-gradient(135deg,#7f93ac,#b9c6d6)]">
          <svg width="28" height="34" viewBox="0 0 28 34"><ellipse cx="14" cy="11" rx="7.500" ry="10" fill="#4f5d71" /><path d="M0 34c0-8 6-10 10-12h8c4 2 10 4 10 12z" fill="#4f5d71" /></svg>
        </div>
      </div>

      <div className="flex h-[124px] border-b-2 border-[#dedede]">
        <div className="ml-[17.500px] mt-[16px] flex h-[91px] w-[164px] items-center justify-center gap-[7px] rounded-[6px] border-2 border-[#d6d6d6] text-[16px] font-bold text-[#3c3c3c]">
          DESIGN <Caret />
        </div>
        <div className="ml-[17.500px] flex flex-col">
          <div className="flex h-[35px] pl-[27px] pt-[8px] text-[16px] leading-[18px] text-[#3c3c3c]">
            <span className="-mx-[18px] h-[27px] border-b-[5px] border-[#0696d7] px-[18px] text-[16.500px] font-semibold text-[#0696d7]">SOLID</span>
            <span className="ml-[67px]">SURFACE</span>
            <span className="ml-[71px]">MESH</span>
            <span className="ml-[71px]">SHEET METAL</span>
            <span className="ml-[74px]">PLASTIC</span>
            <span className="ml-[73px]">UTILITIES</span>
          </div>
          <div className="mt-[5px] flex">
            <Group className="w-[393px] pr-[8px]" label="CREATE">
              <Tool><SketchTool /></Tool><Tool><ExtrudeTool /></Tool><Tool><RevolveTool /></Tool><Tool><HoleTool /></Tool><Tool><PatternTool /></Tool><Tool><FormTool /></Tool>
            </Group>
            <Group className="w-[148px]" label="AUTOMATE"><Tool><AutomateTool /></Tool></Group>
            <Group className="w-[404px]" label="MODIFY">
              <Tool><PressPull /></Tool><Tool><FilletTool /></Tool><Tool><ShellTool /></Tool><Tool><CombineTool /></Tool><Tool><ReplaceTool /></Tool><Tool><MoveIcon s={48} /></Tool>
            </Group>
            <Group className="w-[147px]" label="ASSEMBLE" gap="gap-[16px]"><Tool><NewComp /></Tool><Tool><JointTool /></Tool></Group>
            <Group className="w-[155px]" label="CONSTRUCT" labelClass="pl-[4px]"><Tool><PlaneTool /></Tool></Group>
            <Group className="w-[127px]" label="INSPECT" labelClass="pl-[3px]"><Tool><MeasureTool /></Tool></Group>
            <Group className="w-[111px]" label="INSERT" labelClass="pl-[5px]"><Tool><InsertTool /></Tool></Group>
            <Group className="w-[120px] border-r-0" label="SELECT"><Tool><SelectTool /></Tool></Group>
          </div>
        </div>
      </div>

      <div className="relative h-[679px] overflow-hidden bg-white">
        <Viewport />
        <BrowserPanel />
        <div className="absolute left-[6px] top-[635px] flex h-[35px] w-[449px] items-center border-b-[3px] border-r border-[#cfcfcf] bg-[#f0f0f0] pl-[38px] pr-[16px] pt-[2px]">
          <span className="flex-1 text-[16.500px] text-[#666]">COMMENTS</span>
          <div className="flex h-[14px] w-[14px] items-center justify-center rounded-full bg-[#333] text-[13px] font-bold leading-none text-white">+</div>
        </div>
        <NavBar />
      </div>

      <Timeline />
    </div>
  );
}

/* ---------- desktop ---------- */
function DesktopIcons() {
  const label = "absolute whitespace-nowrap font-['Noto_Sans',sans-serif] text-[17px] leading-[24px] text-white [text-shadow:0_1px_3px_#000]";
  return (
    <>
      <svg width="58" height="60" viewBox="0 0 58 60" className="absolute left-[27px] top-[11px]">
        <path d="M1 10L24 0l33 9-6 49-27 2-16-6z" fill="#c3d3e3" fillOpacity="0.85" />
        <path d="M1 10l23-10 33 9-24 8z" fill="#e4edf4" />
        <path d="M20 32l6-8 5 4-3 5zM35 27l6 9-6 1-3-6zM21 38h8l-1 8-6-2z" fill="#1d7fd0" />
      </svg>
      <span className={`${label} left-[14px] top-[84px]`}>Recycle Bin</span>

      <svg width="60" height="30" viewBox="0 0 60 30" className="absolute left-[139px] top-[8px]"><path d="M28 0L0 30h22l6-8 4 8h6L28 6zM28 0l31 30" fill="#000" stroke="#000" strokeLinejoin="round" /></svg>
      <div className="absolute left-[244px] top-[7px] flex h-[30px] w-[72px] justify-center bg-white">
        <svg width="20" height="30" viewBox="0 0 20 30"><path d="M7 18h6v12H7z" fill="#c9a878" /><path d="M1 8c0-4 18-4 18 0s-3 5-3 7c0 2-12 2-12 0 0-2-3-3-3-7z" fill="#c9a878" stroke="#7c6a4a" strokeWidth=".8" /></svg>
      </div>

      <div className="absolute left-[23px] top-[172px] flex h-[66px] w-[66px] items-center justify-center rounded-full bg-[#148a8f]">
        <div className="mr-[20px] flex h-[24px] w-[24px] items-center justify-center rounded-full border-[4px] border-white"><div className="h-[3px] w-[9px] bg-white" /></div>
      </div>
      <div className="absolute left-[20px] top-[221px]"><Shortcut /></div>
      <span className={`${label} left-[25px] top-[246px]`}>Arduino IDE</span>

      <div className="absolute left-[22px] top-[331px] h-[71px] w-[60px]">
        <div className="absolute left-0 top-[3px] h-[48px] w-[12px] bg-[#ff9a4d]" />
        <div className="absolute left-[11px] top-0 h-[51px] w-[40px] bg-[#ff6c00]" />
        <div className="absolute left-[29px] top-[12px] h-[26px] w-[4px] bg-[#eee]" />
        <div className="absolute left-[5px] top-[51px] h-[20px] w-[50px] bg-[#8b3b00] pl-[20px] text-[14px] font-bold leading-[20px] text-white">360</div>
      </div>
      <div className="absolute left-[20px] top-[383px]"><Shortcut /></div>
      <span className={`${label} left-[17px] top-[408px]`}>Autodesk</span>
      <span className={`${label} left-[13px] top-[432px]`}>Fusion 360</span>

      <div className="absolute left-[22px] top-[493px] flex h-[68px] w-[68px] items-center justify-center rounded-full border-[3px] border-[#e8e8e8] bg-[#111]">
        <svg width="46" height="46" viewBox="0 0 46 46"><path d="M8 10c8-8 22-8 30 0M12 18c6 14 10 20 22 22M14 16c8-4 16-2 22 2" fill="none" stroke="#eee" strokeWidth="3.500" /></svg>
      </div>
      <div className="absolute left-[20px] top-[545px]"><Shortcut /></div>
      <span className={`${label} left-[8px] top-[570px]`}>CBSecurity</span>

      <div className="absolute left-[20px] top-[655px] flex h-[72px] w-[50px] flex-col">
        <div className="h-[9px] bg-white" />
        <div className="h-[18px] bg-[#e08336]" />
        <div className="mt-[2px] h-[15px] bg-[#4fa3d8]" />
        <div className="mt-px h-[18px] bg-[#a0c45a]" />
        <div className="h-[9px] bg-white" />
      </div>
      <div className="absolute left-[20px] top-[708px]"><Shortcut /></div>
      <span className={`${label} left-[12px] top-[731px]`}>Check</span>
      <span className={`${label} left-[38px] top-[757px]`}>Sc</span>

      <div className="absolute left-[22px] top-[819px] flex h-[50px] w-[68px] flex-col items-center justify-center rounded-[6px] bg-[radial-gradient(circle_at_34px_25px,#ffffff_0,#dfe4f4_30%,#3e57ab_75%)] text-[14px] font-bold leading-[17px] text-[#26407c]">
        <span>DRC</span>
        <span>INSIGHT</span>
        <div className="absolute left-[4px] top-[14px] h-[24px] w-[60px] rounded-[50%] border border-[#c9a84a]" />
      </div>
      <div className="absolute left-[20px] top-[869px]"><Shortcut /></div>
      <span className={`${label} left-[3px] top-[894px]`}>DRC INSIGHT</span>
      <span className={`${label} left-[3px] top-[919px]`}>Online</span>

      <div className="absolute left-[1872px] top-[943px] h-[34px] w-[14px] bg-white/10" />
      <div className="absolute left-[1890px] top-[933px] h-[44px] w-[22px] bg-white/10" />
      <div className="absolute left-[1872px] top-[966px] h-[11px] w-[48px] bg-white/5" />
      <div className="absolute left-[1887px] top-[977px] h-[12px] w-[18px] bg-white/10" />
    </>
  );
}

function Taskbar() {
  return (
    <div className="flex h-[60px] shrink-0 items-center bg-[#1e2c3e] font-['Noto_Sans',sans-serif] text-white">
      <svg width="24" height="24" viewBox="0 0 24 24" className="ml-[24px]"><path d="M0 3.500l10-1.500v9.500H0zM11 1.900L24 0v11.500H11zM0 12.500h10V22L0 20.500zM11 12.500h13V24l-13-1.900z" fill="#fff" /></svg>
      <svg width="34" height="34" viewBox="0 0 34 34" className="ml-[43px]"><circle cx="21" cy="13" r="11" fill="none" stroke="#fff" strokeWidth="2.500" /><path d="M13 21L2 32" stroke="#fff" strokeWidth="3" /></svg>
      <svg width="24" height="24" viewBox="0 0 24 24" className="ml-[43px]"><path d="M1 .500h15M1 23.500h15M1 6.500h15v11H1zM23 .500v7M23 13v10.500" stroke="#fff" strokeWidth="1.200" fill="none" /><path d="M21 9h4v3h-4z" fill="#fff" /></svg>
      <svg width="32" height="26" viewBox="0 0 32 26" className="ml-[49px]"><path d="M0 2a2 2 0 012-2h9l3 3h16a2 2 0 012 2v4H0z" fill="#d8a21c" /><path d="M0 6h32v18a2 2 0 01-2 2H2a2 2 0 01-2-2z" fill="#ffd766" /><path d="M9 22v-6a3 3 0 013-3h8a3 3 0 013 3v6h-4v-4h-6v4z" fill="#2f8ee0" /><path d="M13 18h6v8h-6z" fill="#f5b82e" /></svg>
      <div className="ml-[23px] flex h-full w-[73px] items-center justify-center border-b-[3px] border-[#76b9ed] bg-[#4b5666] pt-[3px]"><FusionLogo w={34} h={36} /></div>

      <div className="ml-auto flex items-center">
        <svg width="18" height="10" viewBox="0 0 18 10"><path d="M.5 9.500L9 1l8.500 8.500" fill="none" stroke="#fff" strokeWidth="1.300" /></svg>
        <svg width="24" height="14" viewBox="0 0 24 14" className="ml-[14px]"><path d="M.5.500h20v13H.5z" fill="none" stroke="#fff" /><path d="M2.500 2.500h16v9h-16zM22 5h2v4h-2z" fill="#fff" /></svg>
        <svg width="22" height="20" viewBox="0 0 22 20" className="ml-[13px]"><path d="M.5 6.500h3l6-6v19l-6-6h-3z" fill="none" stroke="#fff" /><path d="M14 7l6 6M20 7l-6 6" stroke="#fff" /></svg>
        <svg width="20" height="20" viewBox="0 0 20 20" className="ml-[16px]"><path d="M.5 19C1 9 8 1 19 .5M5 19c0-7 6-13 14-14M9.500 19c0-4.500 4-9 9.500-9.500" fill="none" stroke="#b9bfc8" /><circle cx="17" cy="18" r="1.500" fill="#fff" /></svg>
        <div className="ml-[6px] flex w-[105px] flex-col items-center text-[17.500px] leading-[28px]">
          <span>12:46 PM</span>
          <span>12/18/2024</span>
        </div>
        <div className="h-[60px] w-[3px] bg-[#6b7480]" />
        <div className="w-[5px]" />
      </div>
    </div>
  );
}

export default function App() {
  return (
    <div className="flex h-screen w-screen flex-col overflow-hidden">
      <div className="relative flex-1 bg-[linear-gradient(180deg,#2c6eb9_0%,#2b6cb7_70%,#1b5a9f_100%)]">
        <DesktopIcons />
        <FusionWindow />
      </div>
      <Taskbar />
    </div>
  );
}
